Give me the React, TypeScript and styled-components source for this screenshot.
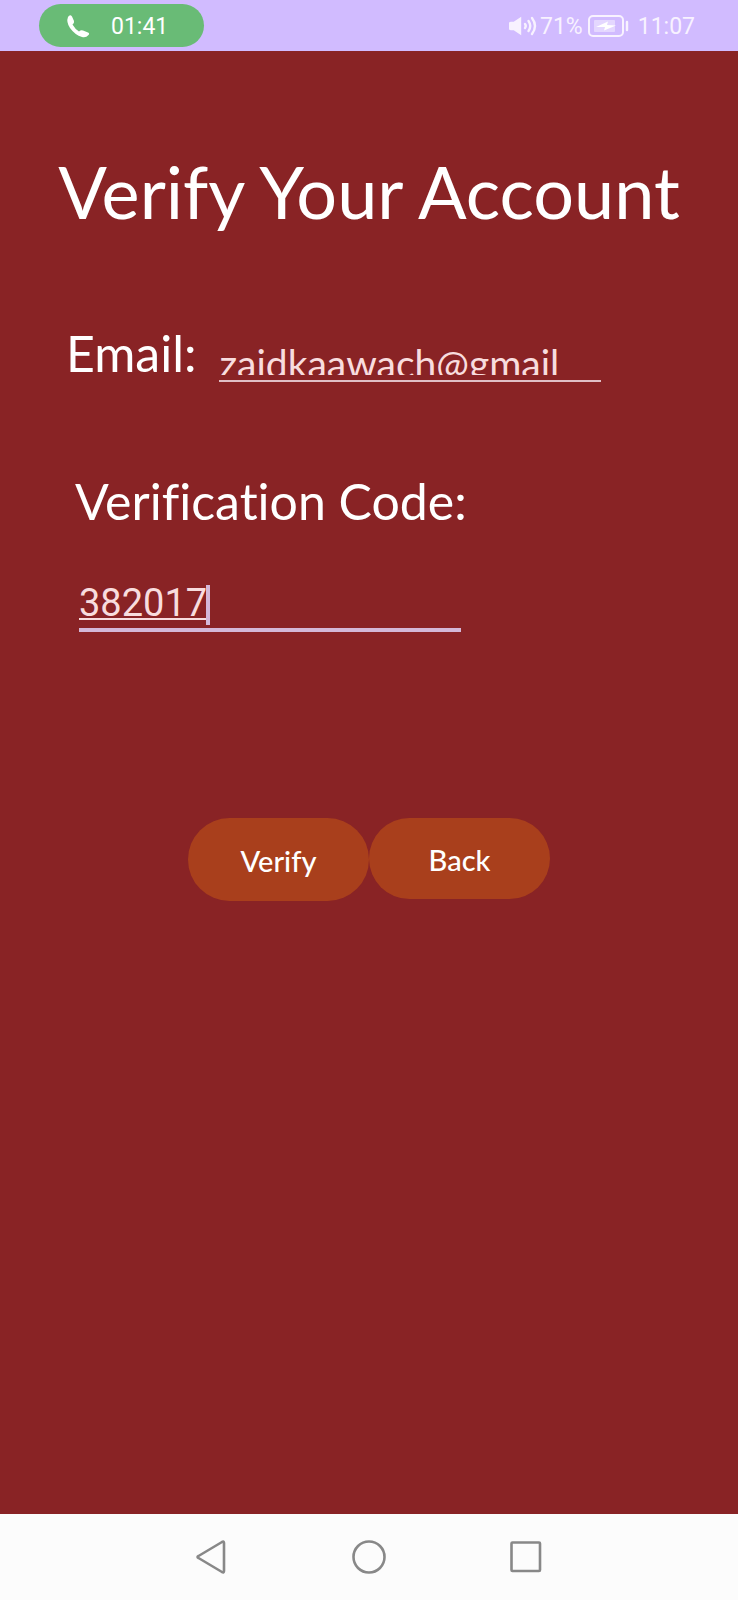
import React, { useState } from "react";
import styled, { createGlobalStyle } from "styled-components";

const GlobalStyle = createGlobalStyle`
  *, *::before, *::after { box-sizing: border-box; }
  body {
    margin: 0;
    background: #892325;
    font-family: Lato, "Open Sans", sans-serif;
    font-variant-ligatures: none;
    color: #fff;
  }
`;

const Screen = styled.div`
  min-height: 100vh;
  display: flex;
  flex-direction: column;
`;

const StatusBar = styled.header`
  display: flex;
  align-items: center;
  justify-content: space-between;
  height: 51px;
  padding: 0 43px 0 39px;
  background: #d1bbff;
  font-family: Roboto, sans-serif;
  font-size: 23px;
  line-height: 28px;
`;

const CallChip = styled.div`
  display: flex;
  align-items: center;
  gap: 21px;
  height: 43px;
  padding: 0 36px 0 27px;
  border-radius: 22px;
  background: #69bb76;
`;

const StatusGroup = styled.div`
  display: flex;
  align-items: center;
  color: #f8f2ff;
`;

const StatusText = styled.span`
  padding-top: 2px;
`;

const Clock = styled.time`
  margin-left: 8px;
  padding-top: 2px;
`;

const Form = styled.form`
  flex: 1;
  display: flex;
  flex-direction: column;
  align-items: stretch;
`;

const Title = styled.h1`
  margin: 96px 0 0;
  font-size: 72px;
  line-height: 88px;
  font-weight: 400;
  text-align: center;
`;

const EmailRow = styled.div`
  display: flex;
  align-items: flex-start;
  gap: 23px;
  padding: 88px 24px 0 66px;
`;

const Label = styled.label`
  font-size: 50px;
  line-height: 60px;
`;

const CodeBlock = styled.div`
  display: flex;
  flex-direction: column;
  align-items: flex-start;
  gap: 54px;
  padding: 88px 24px 0 75px;
`;

const Field = styled.div<{ $active?: boolean }>`
  width: 382px;
  max-width: 100%;
  margin-left: ${(p) => (p.$active ? 4 : 0)}px;
  padding-bottom: ${(p) => (p.$active ? 3 : 5)}px;
  border-bottom: ${(p) => (p.$active ? "4px solid #d4b8d8" : "2px solid #e0bfc6")};
`;

const EmailClip = styled.div`
  height: 30px;
  margin-top: 22px;
  overflow: hidden;
`;

const CodeLine = styled.div`
  display: flex;
  align-items: flex-start;
  height: 40px;
`;

const Caret = styled.span`
  width: 4px;
  height: 40px;
  background: #d4b8d8;
`;

const Input = styled.input<{ $code?: boolean }>`
  display: block;
  width: ${(p) => (p.$code ? "127px" : "100%")};
  height: 36px;
  padding: 0;
  border: 0;
  outline: 0;
  background: transparent;
  color: #f8dcde;
  font-family: ${(p) => (p.$code ? "Roboto" : "Lato")}, sans-serif;
  font-size: ${(p) => (p.$code ? 38 : 39)}px;
  line-height: 36px;
  text-decoration: ${(p) => (p.$code ? "underline" : "none")};
  text-decoration-thickness: 2px;
  text-underline-offset: 2px;
`;

const Actions = styled.div`
  display: flex;
  justify-content: center;
  align-items: flex-start;
  padding: 186px 0 40px;
`;

const ActionButton = styled.button<{ $tall?: boolean }>`
  width: 181px;
  height: ${(p) => (p.$tall ? 83 : 81)}px;
  padding: 2px 0 0;
  border: 0;
  border-radius: 42px;
  background: #a93f1c;
  color: #fff;
  font: 500 29px/36px Lato, sans-serif;
`;

const NavBar = styled.nav`
  display: flex;
  justify-content: center;
  align-items: center;
  gap: 117px;
  height: 86px;
  background: #fcfcfc;
`;

const NavButton = styled.button`
  display: flex;
  width: 40px;
  height: 40px;
  padding: 0;
  border: 0;
  background: transparent;
`;

const Shape = styled.svg`
  display: block;
  fill: none;
  stroke: #888;
  stroke-width: 2.6;
  stroke-linejoin: round;
`;

export default function App() {
  const [email, setEmail] = useState("zaidkaawach@gmail");
  const [code, setCode] = useState("382017");

  return (
    <Screen>
      <GlobalStyle />
      <StatusBar>
        <CallChip>
          <svg width="24" height="24" viewBox="0 0 24 24" fill="#fff" aria-hidden="true">
            <path d="M2 3 Q4 0 6 2.5 L8 7 Q8.500 9 6.500 10.500 Q9 15 13 17.500 Q15 15.500 17 16.500 L22 18.500 Q24 19.500 22.500 21 Q20 24 16 23 Q9 21 4 14 Q0 8 2 3Z" />
          </svg>
          <StatusText>01:41</StatusText>
        </CallChip>
        <StatusGroup>
          <svg width="31" height="24" viewBox="0 0 31 24" fill="none" stroke="#f8f2ff" strokeWidth="2.4" strokeLinecap="round" aria-hidden="true">
            <path d="M2 9 H5 L11 5 V19 L5 15 H2 Q1 15 1 14 V10 Q1 9 2 9Z" fill="#f8f2ff" />
            <path d="M16 10 Q17.500 12 16 14 M19.500 7 Q23 12 19.500 17 M23 4 Q29 12 23 20" />
          </svg>
          <StatusText>71%</StatusText>
          <svg width="47" height="24" viewBox="0 0 47 24" aria-hidden="true">
            <rect x="6" y="2" width="34" height="20" rx="4" fill="none" stroke="#f8f2ff" strokeWidth="2" />
            <rect x="11" y="6" width="21" height="12" rx="1" fill="#e4d7ff" />
            <path d="M13 13 L25 7.500 L24 11 L33 11.500 L21 16.500 L22 13Z" fill="#fff" />
            <path d="M44 8 V16" stroke="#f8f2ff" strokeWidth="2.400" strokeLinecap="round" />
          </svg>
          <Clock>11:07</Clock>
        </StatusGroup>
      </StatusBar>

      <Form onSubmit={(e) => e.preventDefault()}>
        <Title>Verify Your Account</Title>
        <EmailRow>
          <Label htmlFor="email">Email:</Label>
          <Field>
            <EmailClip>
              <Input id="email" value={email} onChange={(e) => setEmail(e.target.value)} />
            </EmailClip>
          </Field>
        </EmailRow>
        <CodeBlock>
          <Label htmlFor="code">Verification Code:</Label>
          <Field $active>
            <CodeLine>
              <Input $code id="code" inputMode="numeric" value={code} onChange={(e) => setCode(e.target.value)} />
              <Caret />
            </CodeLine>
          </Field>
        </CodeBlock>
        <Actions>
          <ActionButton $tall type="submit">Verify</ActionButton>
          <ActionButton type="button">Back</ActionButton>
        </Actions>
      </Form>

      <NavBar aria-label="System navigation">
        <NavButton aria-label="Back">
          <Shape width="40" height="40" viewBox="0 0 40 40">
            <path d="M6.500 19 Q4.500 20 6.500 21 L30 35 Q32 36 32 34 V6 Q32 4 30 5Z" />
          </Shape>
        </NavButton>
        <NavButton aria-label="Home">
          <Shape width="40" height="40" viewBox="0 0 40 40">
            <circle cx="20" cy="20" r="15.5" />
          </Shape>
        </NavButton>
        <NavButton aria-label="Recent apps">
          <Shape width="40" height="40" viewBox="0 0 40 40">
            <rect x="5.500" y="5.500" width="28.500" height="28.500" rx="1" />
          </Shape>
        </NavButton>
      </NavBar>
    </Screen>
  );
}
